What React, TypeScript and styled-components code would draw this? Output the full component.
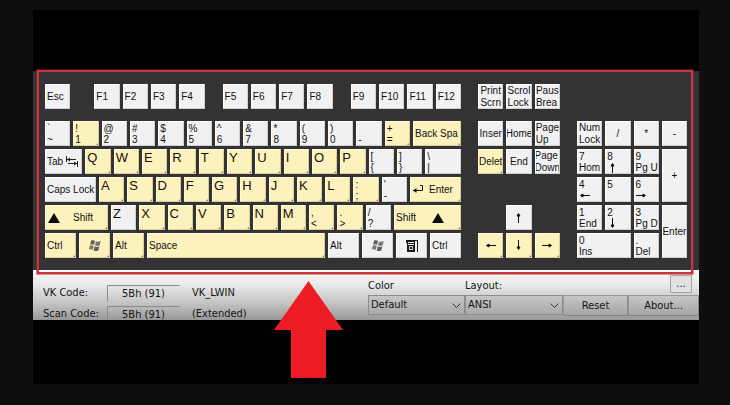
import React from "react";
import styled, { createGlobalStyle, css } from "styled-components";

type Tone = "plain" | "used";
type Kind = "word" | "letter" | "pair" | "center";
type Direction = "up" | "down" | "left" | "right";

interface KeySpec {
  label?: React.ReactNode[];
  grow?: number;
  tone?: Tone;
  kind?: Kind;
  icon?: React.ReactNode;
  iconAfter?: boolean;
  name?: string;
  area?: string;
}

const GlobalStyle = createGlobalStyle`
  * { box-sizing: border-box; }
  html, body { margin: 0; background: #0e0e0e; }
  button, select, input { font: inherit; color: inherit; margin: 0; }
`;

const Page = styled.main`
  min-height: 100vh;
  display: flex;
  padding: 10px 31px 21px 33px;
  font-family: "Liberation Sans", Arial, sans-serif;
  font-size: 10px;
  color: #111;
`;

const Stage = styled.div`
  position: relative;
  flex: 1;
  background: #000;
  padding-top: 61px;
`;

const Keyboard = styled.section`
  position: relative;
  display: grid;
  grid-template-columns: 416fr 82fr 110fr;
  column-gap: 17px;
  padding: 13px 12px 12px;
  background: #333;
`;

const Frame = styled.div`
  position: absolute;
  inset: -1px 6px -4px 4px;
  border: 2px solid #cb333c;
  box-shadow: 0 0 0 1px rgba(160, 40, 48, 0.45);
  pointer-events: none;
`;

const MainBlock = styled.div`
  min-width: 0;
  display: flex;
  flex-direction: column;
  gap: 3px;
`;

const FunctionRow = styled.div`
  display: grid;
  grid-template-columns:
    minmax(0, 1fr) 18px repeat(4, minmax(0, 1fr)) 12px repeat(4, minmax(0, 1fr))
    12px repeat(4, minmax(0, 1fr));
  gap: 3px;
  height: 25px;
  margin-bottom: 9px;
`;

const KeyRow = styled.div<{ $weights: number[] }>`
  display: grid;
  grid-template-columns: ${(p) => p.$weights.map((w) => `minmax(0, ${w}fr)`).join(" ")};
  gap: 3px;
  height: 25px;
`;

const SideBlock = styled.div<{ $columns: number }>`
  min-width: 0;
  display: grid;
  grid-template-columns: repeat(${(p) => p.$columns}, minmax(0, 1fr));
  grid-template-rows: 25px 6px repeat(5, 25px);
  gap: 3px;
`;

const kinds = {
  word: css`
    align-items: center;
    padding: 0 0 0 1px;
  `,
  letter: css`
    align-items: flex-start;
    padding: 0 0 0 1px;
    font-size: 13px;
    line-height: 16px;
  `,
  pair: css`
    align-items: flex-start;
    padding: 1px 0 0 1px;
    line-height: 11px;
  `,
  center: css`
    align-items: center;
    justify-content: center;
    padding: 0;
  `,
};

const KeyCap = styled.button<{ $tone: Tone; $kind: Kind; $area?: string }>`
  position: relative;
  display: flex;
  gap: 3px;
  min-width: 0;
  overflow: hidden;
  border: 1px solid;
  border-color: ${(p) => (p.$tone === "used" ? "#fffbe0 #d8cf9c #d8cf9c #fffbe0" : "#fff #cfcfcf #cfcfcf #fff")};
  background: ${(p) => (p.$tone === "used" ? "#fdf2bc" : "#f1f1f2")};
  color: #111;
  line-height: 12px;
  text-align: left;
  white-space: nowrap;
  grid-area: ${(p) => p.$area ?? "auto"};
  ${(p) => kinds[p.$kind]}
  ${(p) =>
    p.$tone === "used" &&
    css`
      &::after {
        content: "";
        position: absolute;
        right: -1px;
        bottom: -1px;
        border: 2px solid;
        border-color: transparent #8a8466 #8a8466 transparent;
      }
    `}
`;

const Legend = styled.span`
  display: flex;
  flex-direction: column;
`;

function Key({ label = [], tone = "plain", kind = "word", icon, iconAfter, name, area }: KeySpec) {
  return (
    <KeyCap type="button" $tone={tone} $kind={kind} $area={area} aria-label={name}>
      {!iconAfter && icon}
      {label.length > 0 && (
        <Legend>
          {label.map((line, i) => (
            <span key={i}>{line}</span>
          ))}
        </Legend>
      )}
      {iconAfter && icon}
    </KeyCap>
  );
}

const WindowsIcon = () => (
  <svg width="14" height="13" viewBox="0 0 14 13" fill="#5d5d60">
    <path d="M3.2 1.6C4.6.9 5.8 1 7 1.8L6 5.9C4.8 5.1 3.5 5 2.1 5.7Z" />
    <path d="M8 2.2c1.4.8 2.8.8 4.8-.2l-1.1 4.2c-1.8.9-3.2.9-4.7.1Z" fill="#77777c" />
    <path d="M1.8 6.7c1.4-.7 2.7-.6 3.9.2l-1 4.1C3.5 10.2 2.2 10.1.8 10.8Z" fill="#77777c" />
    <path d="M6.7 7.3c1.5.8 2.9.8 4.7-.1l-1.1 4.2c-1.8.9-3.2.9-4.6.1Z" />
  </svg>
);

const MenuIcon = () => (
  <svg width="12" height="12" viewBox="0 0 12 12">
    <path d="M0 0h12v1H9v11H1V3H0Z" fill="#191919" />
    <path d="M11.5 0v12" stroke="#191919" />
    <path d="M2 2.5h6M2 4.5h6" stroke="#eee" />
    <path d="M3.5 6.500h3v3h-3Z" fill="none" stroke="#ddd" />
  </svg>
);

const TabIcon = () => (
  <svg width="12" height="11" viewBox="0 0 12 11" fill="none" stroke="#222">
    <path d="M.5 0v6M1 3.5h9M11.5 5v6M2 7.5h9" />
    <path d="M1 3.5l3-2v4ZM11 7.5l-3-2v4Z" fill="#222" stroke="none" />
  </svg>
);

const IconSlot = styled.span<{ $side: "enter" | "before" | "after" }>`
  display: flex;
  padding: ${(p) => ({ enter: "0 2px 0 0", before: "0 10px 0 1px", after: "0 0 0 13px" })[p.$side]};
`;

const EnterIcon = () => (
  <IconSlot $side="enter">
    <svg width="12" height="9" viewBox="0 0 12 9" fill="none" stroke="#111">
      <path d="M8 .5h2.500v5H1" />
      <path d="M4.500 3v5L1 5.500Z" fill="#111" stroke="none" />
    </svg>
  </IconSlot>
);

const Triangle = ({ after }: { after?: boolean }) => (
  <IconSlot $side={after ? "after" : "before"}>
    <svg width="12" height="10" viewBox="0 0 12 10" fill="#0a0a0a">
      <path d="M6 0l6 10H0Z" />
    </svg>
  </IconSlot>
);

const arrowPaths: Record<Direction, string> = {
  left: "M11 5.5H2M4 4L1.500 5.500 4 7Z",
  right: "M0 5.5h9M7 4l2.500 1.500L7 7Z",
  up: "M5.5 11V2M4 4l1.500-2.500L7 4Z",
  down: "M5.5 0v9M4 7l1.500 2.500L7 7Z",
};

const ArrowSvg = styled.svg`
  display: block;
`;

const Arrow = ({ to }: { to: Direction }) => (
  <ArrowSvg width="11" height="11" viewBox="0 0 11 11" fill="#111" stroke="#111" role="img" aria-label={to}>
    <path d={arrowPaths[to]} />
  </ArrowSvg>
);

const letters = (text: string, plain = ""): KeySpec[] =>
  text.split("").map((c) => ({ label: [c], kind: "letter", tone: plain.includes(c) ? "plain" : "used" }));

const pair = (a: React.ReactNode, b: React.ReactNode, tone: Tone = "plain"): KeySpec => ({
  label: [a, b],
  kind: "pair",
  tone,
});

const functionGroups = [
  ["F1", "F2", "F3", "F4"],
  ["F5", "F6", "F7", "F8"],
  ["F9", "F10", "F11", "F12"],
];

const rows: KeySpec[][] = [
  [
    pair("`", "~"), pair("!", "1", "used"), pair("@", "2"), pair("#", "3"), pair("$", "4"),
    pair("%", "5"), pair("^", "6"), pair("&", "7"), pair("*", "8"), pair("(", "9"),
    pair(")", "0"), pair("\u00a0", "-"), pair("+", "=", "used"),
    { label: ["Back Spa"], grow: 480, tone: "used" },
  ],
  [
    { label: ["Tab"], grow: 373, icon: <TabIcon />, iconAfter: true },
    ...letters("QWERTYUIOP"),
    pair("[", "{"), pair("]", "}"),
    { ...pair("\\", "|"), grow: 357 },
  ],
  [
    { label: ["Caps Lock"], grow: 510 },
    ...letters("ASDFGHJKL"),
    pair(":", ";", "used"), pair("'", "-"),
    { label: ["Enter"], grow: 510, tone: "used", icon: <EnterIcon /> },
  ],
  [
    { label: ["Shift"], grow: 630, tone: "used", icon: <Triangle /> },
    ...letters("ZXCVBNM", "Z"),
    pair(",", "<", "used"), pair(".", ">", "used"), pair("/", "?"),
    { label: ["Shift"], grow: 670, tone: "used", icon: <Triangle after />, iconAfter: true },
  ],
  [
    { label: ["Ctrl"], grow: 310, tone: "used" },
    { grow: 310, tone: "used", kind: "center", icon: <WindowsIcon />, name: "Left Windows" },
    { label: ["Alt"], grow: 310, tone: "used" },
    { label: ["Space"], grow: 1780, tone: "used" },
    { label: ["Alt"], grow: 310 },
    { grow: 310, kind: "center", icon: <WindowsIcon />, name: "Right Windows" },
    { grow: 310, kind: "center", icon: <MenuIcon />, name: "Menu" },
    { label: ["Ctrl"], grow: 310 },
  ],
];

const navKeys: KeySpec[] = [
  { label: ["Print", "Scrn"], kind: "center", area: "1 / 1" },
  { label: ["Scrol", "Lock"], kind: "center", area: "1 / 2" },
  { label: ["Paus", "Brea"], kind: "center", area: "1 / 3" },
  { label: ["Inser"], kind: "center", area: "3 / 1" },
  { label: ["Home"], kind: "center", area: "3 / 2" },
  { label: ["Page", "Up"], kind: "center", area: "3 / 3" },
  { label: ["Delet"], kind: "center", tone: "used", area: "4 / 1" },
  { label: ["End"], kind: "center", area: "4 / 2" },
  { label: ["Page", "Down"], kind: "center", area: "4 / 3" },
  { icon: <Arrow to="up" />, kind: "center", area: "6 / 2" },
  { icon: <Arrow to="left" />, kind: "center", tone: "used", area: "7 / 1" },
  { icon: <Arrow to="down" />, kind: "center", tone: "used", area: "7 / 2" },
  { icon: <Arrow to="right" />, kind: "center", tone: "used", area: "7 / 3" },
];

const padKeys: KeySpec[] = [
  { label: ["Num", "Lock"], kind: "center", area: "3 / 1" },
  { label: ["/"], kind: "center", area: "3 / 2" },
  { label: ["*"], kind: "center", area: "3 / 3" },
  { label: ["-"], kind: "center", area: "3 / 4" },
  { ...pair("7", "Hom"), area: "4 / 1" },
  { ...pair("8", <Arrow to="up" />), area: "4 / 2" },
  { ...pair("9", "Pg U"), area: "4 / 3" },
  { label: ["+"], kind: "center", area: "4 / 4 / 6 / 5" },
  { ...pair("4", <Arrow to="left" />), area: "5 / 1" },
  { ...pair("5", "\u00a0"), area: "5 / 2" },
  { ...pair("6", <Arrow to="right" />), area: "5 / 3" },
  { ...pair("1", "End"), area: "6 / 1" },
  { ...pair("2", <Arrow to="down" />), area: "6 / 2" },
  { ...pair("3", "Pg D"), area: "6 / 3" },
  { label: ["Enter"], kind: "center", area: "6 / 4 / 8 / 5" },
  { ...pair("0", "Ins"), area: "7 / 1 / 8 / 3" },
  { ...pair(".", "Del"), area: "7 / 3" },
];

const Panel = styled.section`
  display: grid;
  grid-template-columns: 335fr 331fr;
  height: 50px;
  overflow: hidden;
  border-top: 1px solid #fff;
  background: linear-gradient(#f6f6f6 0%, #ececec 25%, #c4c4c4 65%, #989898 100%);
  font-family: "DejaVu Sans Condensed", "DejaVu Sans", sans-serif;
  font-size: 11px;
  line-height: 16px;
  color: #151515;
`;

const Codes = styled.div`
  display: grid;
  grid-template-columns: 64px 73px 1fr;
  grid-auto-rows: 17px;
  row-gap: 4px;
  padding: 14px 0 0 10px;
`;

const CodeValue = styled.output`
  border: 1px solid;
  border-color: #8b8b8b transparent transparent #8b8b8b;
  line-height: 15px;
  text-align: center;
`;

const CodeNote = styled.span`
  padding-left: 12px;
`;

const Options = styled.div`
  display: grid;
  grid-template-columns: 97fr 98fr 65fr 71fr;
  grid-template-rows: 24px 21px;
`;

const OptionLabel = styled.label`
  padding-top: 7px;
`;

const SelectBox = styled.div`
  position: relative;
  display: flex;
  svg {
    position: absolute;
    right: 4px;
    top: 8px;
    pointer-events: none;
  }
`;

const Select = styled.select`
  appearance: none;
  width: 100%;
  height: 20px;
  padding: 0 16px 0 2px;
  border: 1px solid #8c8c8c;
  border-radius: 0;
  background: linear-gradient(#c6c6c6, #aaa);
`;

const PushButton = styled.button`
  padding: 0;
  border: 1px solid;
  border-color: #999 #8a8a8a #858585 #999;
  background: linear-gradient(#c6c6c6, #a6a6a6);
`;

const MoreButton = styled.button`
  grid-column: 3 / 5;
  justify-self: end;
  width: 22px;
  height: 18px;
  margin: 4px 7px 0 0;
  padding: 0;
  border: 1px solid #a5a5a5;
  background: #e2e2e2;
  line-height: 12px;
`;

const Chevron = () => (
  <svg width="9" height="6" viewBox="0 0 9 6" fill="none" stroke="#333">
    <path d="M.5.5l4 4 4-4" />
  </svg>
);

const Pointer = styled.svg`
  position: absolute;
  left: calc(50% - 92px);
  top: 271px;
`;

export default function App() {
  return (
    <>
      <GlobalStyle />
      <Page>
        <Stage>
          <Keyboard aria-label="Keyboard">
            <MainBlock>
              <FunctionRow>
                <Key label={["Esc"]} />
                {functionGroups.map((group, i) => (
                  <React.Fragment key={i}>
                    <span />
                    {group.map((f) => (
                      <Key key={f} label={[f]} />
                    ))}
                  </React.Fragment>
                ))}
              </FunctionRow>
              {rows.map((row, r) => (
                <KeyRow key={r} $weights={row.map((k) => k.grow ?? 253)}>
                  {row.map((k, i) => (
                    <Key key={i} {...k} />
                  ))}
                </KeyRow>
              ))}
            </MainBlock>
            <SideBlock $columns={3}>
              {navKeys.map((k) => (
                <Key key={k.area} {...k} />
              ))}
            </SideBlock>
            <SideBlock $columns={4}>
              {padKeys.map((k) => (
                <Key key={k.area} {...k} />
              ))}
            </SideBlock>
            <Frame />
          </Keyboard>
          <Panel>
            <Codes>
              <label htmlFor="vk">VK Code:</label>
              <CodeValue id="vk">5Bh (91)</CodeValue>
              <CodeNote>VK_LWIN</CodeNote>
              <label htmlFor="scan">Scan Code:</label>
              <CodeValue id="scan">5Bh (91)</CodeValue>
              <CodeNote>(Extended)</CodeNote>
            </Codes>
            <Options>
              <OptionLabel htmlFor="color">Color</OptionLabel>
              <OptionLabel htmlFor="layout">Layout:</OptionLabel>
              <MoreButton type="button">...</MoreButton>
              <SelectBox>
                <Select id="color">
                  <option>Default</option>
                </Select>
                <Chevron />
              </SelectBox>
              <SelectBox>
                <Select id="layout">
                  <option>ANSI</option>
                </Select>
                <Chevron />
              </SelectBox>
              <PushButton type="button">Reset</PushButton>
              <PushButton type="button">About...</PushButton>
            </Options>
          </Panel>
          <Pointer width="69" height="97" viewBox="0 0 69 97" fill="#ed1c24" aria-hidden="true">
            <path d="M34.5 0L69 49H52v48H17V49H0Z" />
          </Pointer>
        </Stage>
      </Page>
    </>
  );
}
